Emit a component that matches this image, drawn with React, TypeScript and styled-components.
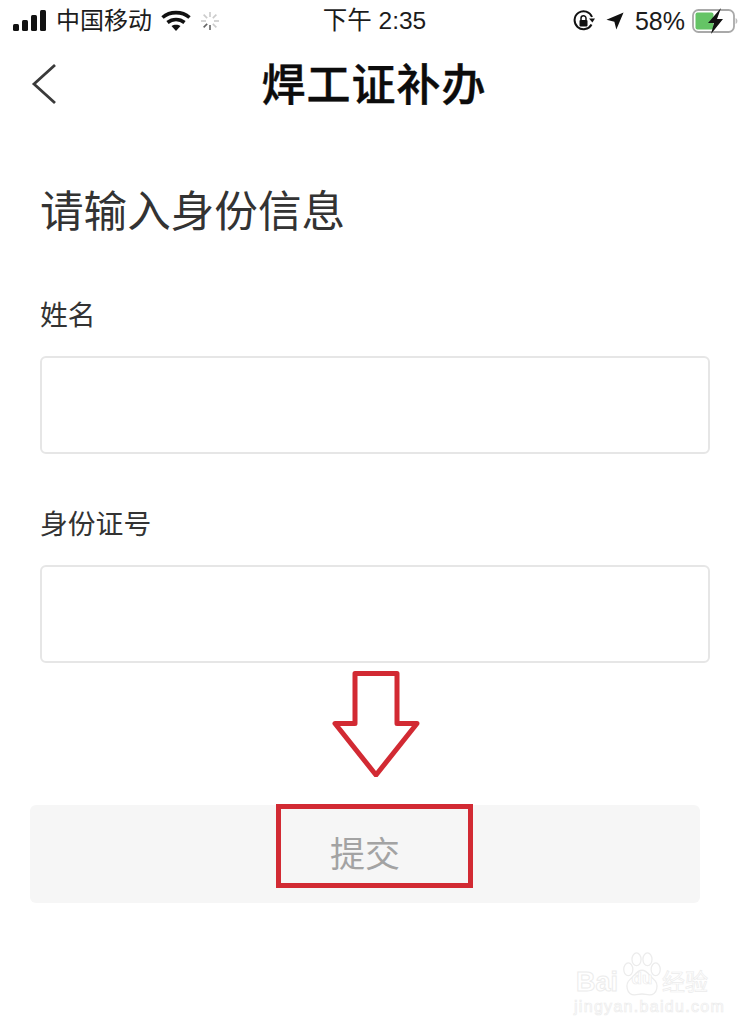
import styled, { createGlobalStyle } from "styled-components";

const GlobalStyle = createGlobalStyle`
  html, body {
    margin: 0;
    padding: 0;
    background: #fff;
  }
  body {
    font-family: "Liberation Sans", "Noto Sans CJK SC", sans-serif;
  }
`;

const Page = styled.div`
  position: relative;
  width: 750px;
  height: 1032px;
  overflow: hidden;
  background: #fff;
`;

const StatusBar = styled.div`
  display: grid;
  grid-template-columns: 1fr auto 1fr;
  align-items: center;
  height: 42px;
  padding: 0 12px 0 13px;
  font-size: 24px;
  color: #1c1c1c;
`;

const StatusGroup = styled.div<{ $end?: boolean }>`
  display: flex;
  align-items: center;
  justify-content: ${(p) => (p.$end ? "flex-end" : "flex-start")};
  gap: ${(p) => (p.$end ? "11px" : "9px")};
`;

const StatusText = styled.span<{ $size?: number }>`
  font-size: ${(p) => p.$size ?? 24}px;
  line-height: 28px;
  white-space: nowrap;
`;

const ClockText = styled(StatusText)`
  margin-right: 2px;
`;

const BatteryBox = styled.span`
  display: flex;
  margin-left: -4px;
`;

const NavBar = styled.div`
  position: relative;
  display: flex;
  align-items: center;
  justify-content: center;
  height: 88px;
`;

const BackButton = styled.button`
  position: absolute;
  left: 30px;
  top: 20px;
  width: 32px;
  height: 44px;
  padding: 0;
  border: 0;
  background: none;
`;

const NavTitle = styled.h1`
  margin: 0 2px 0 0;
  font-size: 44px;
  font-weight: 500;
  letter-spacing: 1px;
  line-height: 50px;
  color: #0c0c0c;
  -webkit-text-stroke: 0.4px #0c0c0c;
`;

const Form = styled.div`
  display: flex;
  flex-direction: column;
  padding: 52px 40px 0;
`;

const Heading = styled.h2`
  margin: 0 0 54px;
  font-size: 43.6px;
  font-weight: 400;
  line-height: 60px;
  color: #333;
`;

const Field = styled.label`
  display: flex;
  flex-direction: column;
  gap: 20px;
  margin-bottom: 51px;
  &:last-of-type {
    margin-bottom: 0;
  }
`;

const FieldLabel = styled.span`
  font-size: 27.8px;
  line-height: 40px;
  color: #333;
`;

const TextBox = styled.input`
  box-sizing: border-box;
  width: 670px;
  height: 98px;
  border: 2px solid #e6e6e6;
  border-radius: 6px;
  background: #fff;
  outline: none;
`;

const ArrowRow = styled.div`
  display: flex;
  justify-content: center;
  padding: 8px 0 28px 2px;
`;

const SubmitRow = styled.div`
  padding: 0 50px 0 30px;
`;

const SubmitButton = styled.button`
  position: relative;
  display: flex;
  align-items: center;
  justify-content: center;
  box-sizing: border-box;
  width: 670px;
  height: 98px;
  padding: 0 0 6px;
  border: 0;
  border-radius: 6px;
  background: #f6f6f6;
  font-family: inherit;
  font-size: 35px;
  color: #a3a3a3;
`;

const Highlight = styled.span`
  position: absolute;
  left: 246px;
  top: -1px;
  box-sizing: border-box;
  width: 197px;
  height: 84px;
  border: 5px solid #d22a33;
`;

const Watermark = styled.div`
  position: absolute;
  right: 40px;
  bottom: 14px;
  width: 136px;
  color: #fff;
  -webkit-text-stroke: 1px #ececec;
`;

const WatermarkTop = styled.div`
  position: relative;
  display: flex;
  align-items: flex-end;
  height: 56px;
  padding-left: 2px;
  font-size: 27px;
  font-weight: 700;
  line-height: 22px;
  white-space: nowrap;
`;

const PawBox = styled.span`
  position: absolute;
  left: 47px;
  top: 15px;
  display: flex;
  align-items: flex-end;
  justify-content: center;
  width: 42px;
  height: 44px;
`;

const PawShape = styled.svg`
  position: absolute;
  inset: 0;
`;

const PawLabel = styled.span`
  position: relative;
  margin-bottom: 8px;
  font-size: 17px;
  font-weight: 700;
  line-height: 18px;
  -webkit-text-stroke: 0.7px #ececec;
`;

const WatermarkCn = styled.span`
  position: absolute;
  left: 88px;
  bottom: 0;
  font-size: 23px;
  font-weight: 400;
  -webkit-text-stroke: 0.7px #ececec;
`;

const WatermarkUrl = styled.div`
  margin-top: 3px;
  font-size: 16px;
  letter-spacing: 1.3px;
  line-height: 22px;
  white-space: nowrap;
  -webkit-text-stroke: 0.7px #ececec;
`;

function SignalIcon() {
  return (
    <svg width="34" height="22" viewBox="0 0 34 22" fill="#111">
      <rect x="0" y="14" width="6" height="7" rx="1.5" />
      <rect x="9" y="10" width="6" height="11" rx="1.5" />
      <rect x="18" y="5" width="6" height="16" rx="1.5" />
      <rect x="27" y="0" width="6" height="21" rx="1.5" />
    </svg>
  );
}

function WifiIcon() {
  return (
    <svg width="30" height="22" viewBox="0 0 30 22" fill="none" stroke="#111" strokeWidth="3.6">
      <path d="M1.5 7.5C9 1 21 1 28.5 7.5" />
      <path d="M6.5 12.5C11.5 8.5 18.5 8.5 23.5 12.5" />
      <path d="M15 21l-4.5-5c2.5-1.8 6.5-1.8 9 0z" fill="#111" stroke="none" />
    </svg>
  );
}

function SpinnerIcon() {
  const spokes = [0, 45, 90, 135, 180, 225, 270, 315];
  return (
    <svg width="20" height="20" viewBox="0 0 20 20" stroke="#555" strokeWidth="1.6">
      {spokes.map((deg, i) => (
        <line key={deg} x1="10" y1="1" x2="10" y2="6" opacity={i > 3 && i < 6 ? 0.9 : 0.3} transform={`rotate(${deg} 10 10)`} />
      ))}
    </svg>
  );
}

function RotationLockIcon() {
  return (
    <svg width="22" height="22" viewBox="0 0 22 22" fill="none">
      <path d="M18.5 14.5A9 9 0 1 1 19 7" stroke="#111" strokeWidth="2" />
      <path d="M16 8.5h6l-2.6 4z" fill="#111" />
      <rect x="6.5" y="10" width="8" height="6.5" rx="1" fill="#111" />
      <path d="M8 10V8.2a2.5 2.5 0 0 1 5 0V10" stroke="#111" strokeWidth="1.5" />
    </svg>
  );
}

function LocationIcon() {
  return (
    <svg width="18" height="18" viewBox="0 0 20 20" fill="#111">
      <path d="M19.5 .5L11.5 19.5 9.3 10.7 .5 8.5z" />
    </svg>
  );
}

function BatteryIcon() {
  return (
    <svg width="46" height="26" viewBox="0 0 46 26" fill="none">
      <rect x="1" y="2" width="41" height="22" rx="5.5" stroke="#a9a9a9" strokeWidth="1.8" />
      <rect x="3.5" y="4.5" width="18" height="17" rx="2" fill="#65c466" />
      <path d="M43.6 10v6c1.2-.5 1.8-1.6 1.8-3s-.6-2.5-1.8-3z" fill="#bdbdbd" />
      <path d="M29 0L16 15h6l-3 11 12-15h-6z" fill="#111" />
    </svg>
  );
}

function DownArrow() {
  return (
    <svg width="88" height="106" viewBox="0 0 88 106">
      <path d="M23 2.5H65V52.5H85L44 104 3 52.5H23z" fill="#fff" stroke="#d22a33" strokeWidth="5" strokeLinejoin="round" />
    </svg>
  );
}

export default function App() {
  return (
    <Page>
      <GlobalStyle />
      <StatusBar>
        <StatusGroup>
          <SignalIcon />
          <StatusText>中国移动</StatusText>
          <WifiIcon />
          <SpinnerIcon />
        </StatusGroup>
        <ClockText $size={24.5}>下午 2:35</ClockText>
        <StatusGroup $end>
          <RotationLockIcon />
          <LocationIcon />
          <StatusText $size={25}>58%</StatusText>
          <BatteryBox>
            <BatteryIcon />
          </BatteryBox>
        </StatusGroup>
      </StatusBar>
      <NavBar>
        <BackButton aria-label="返回">
          <svg width="32" height="44" viewBox="0 0 32 44" fill="none" stroke="#3a3a3a" strokeWidth="2.8">
            <path d="M25 3L4 22l21 19" />
          </svg>
        </BackButton>
        <NavTitle>焊工证补办</NavTitle>
      </NavBar>
      <Form>
        <Heading>请输入身份信息</Heading>
        <Field>
          <FieldLabel>姓名</FieldLabel>
          <TextBox />
        </Field>
        <Field>
          <FieldLabel>身份证号</FieldLabel>
          <TextBox />
        </Field>
      </Form>
      <ArrowRow>
        <DownArrow />
      </ArrowRow>
      <SubmitRow>
        <SubmitButton>
          提交
          <Highlight />
        </SubmitButton>
      </SubmitRow>
      <Watermark>
        <WatermarkTop>
          Bai
          <PawBox>
            <PawShape viewBox="0 0 46 50" fill="#fff" stroke="#ececec" strokeWidth="1.4">
              <ellipse cx="8" cy="19" rx="5" ry="7" />
              <ellipse cx="17" cy="8" rx="5" ry="7" />
              <ellipse cx="29" cy="8" rx="5" ry="7" />
              <ellipse cx="38" cy="19" rx="5" ry="7" />
              <path d="M23 20c6 0 8 6 13 10 6 5 4 17-5 17-3 0-5-1-8-1s-5 1-8 1c-9 0-11-12-5-17 5-4 7-10 13-10z" />
            </PawShape>
            <PawLabel>du</PawLabel>
          </PawBox>
          <WatermarkCn>经验</WatermarkCn>
        </WatermarkTop>
        <WatermarkUrl>jingyan.baidu.com</WatermarkUrl>
      </Watermark>
    </Page>
  );
}
